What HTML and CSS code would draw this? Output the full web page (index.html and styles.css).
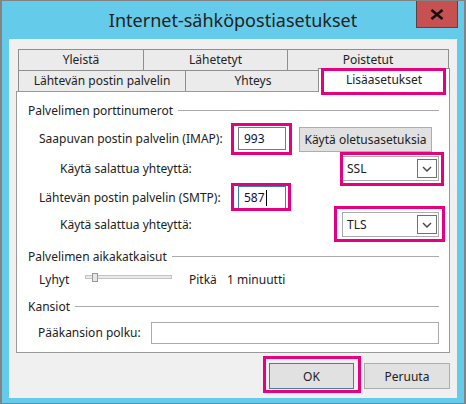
FILE: index.html
```html
<!DOCTYPE html>
<html lang="fi">
<head>
    <meta charset="UTF-8">
    <title>Internet-sähköpostiasetukset</title>
    <link rel="stylesheet" href="styles.css">
</head>
<body>
    <div class="window">
        <div class="titlebar">
            <div class="spacer"></div>
            <div class="title">Internet-sähköpostiasetukset</div>
            <button class="close" title="Sulje">
                <svg width="14" height="11" viewBox="0 0 14 11"><path d="M1.5 1 L12.5 10 M12.5 1 L1.5 10" stroke="#111" stroke-width="2.6" fill="none"/></svg>
            </button>
        </div>

        <div class="client">
            <div class="tabs">
                <div class="tabrow">
                    <div class="tab tab-yleista">Yleistä</div>
                    <div class="tab tab-lahetetyt">Lähetetyt</div>
                    <div class="tab tab-poistetut">Poistetut</div>
                </div>
                <div class="tabrow">
                    <div class="tab tab-lahteva">Lähtevän postin palvelin</div>
                    <div class="tab tab-yhteys">Yhteys</div>
                    <div class="tab tab-active mark mark-tab">Lisäasetukset</div>
                </div>
            </div>

            <div class="panel">
                <div class="group">Palvelimen porttinumerot</div>

                <div class="row row-imap">
                    <span class="label label-port">Saapuvan postin palvelin (IMAP):</span>
                    <div class="field port mark mark-imap">993</div>
                    <button class="btn btn-defaults">Käytä oletusasetuksia</button>
                </div>

                <div class="row row-ssl">
                    <span class="label label-sub">Käytä salattua yhteyttä:</span>
                    <div class="select mark mark-ssl">
                        <span>SSL</span>
                        <span class="chev"><svg width="10" height="6" viewBox="0 0 10 6"><path d="M1 1 L5 5 L9 1" stroke="#444" stroke-width="1.4" fill="none"/></svg></span>
                    </div>
                </div>

                <div class="row row-smtp">
                    <span class="label label-port">Lähtevän postin palvelin (SMTP):</span>
                    <div class="field port focus mark mark-smtp">587<span class="caret"></span></div>
                </div>

                <div class="row row-tls">
                    <span class="label label-sub">Käytä salattua yhteyttä:</span>
                    <div class="select mark mark-tls">
                        <span>TLS</span>
                        <span class="chev"><svg width="10" height="6" viewBox="0 0 10 6"><path d="M1 1 L5 5 L9 1" stroke="#444" stroke-width="1.4" fill="none"/></svg></span>
                    </div>
                </div>

                <div class="group group-timeout">Palvelimen aikakatkaisut</div>

                <div class="row row-slider">
                    <span class="label label-short">Lyhyt</span>
                    <div class="track"><div class="thumb"></div></div>
                    <span class="label-long">Pitkä</span>
                    <span>1 minuutti</span>
                </div>

                <div class="group group-folders">Kansiot</div>

                <div class="row row-path">
                    <span class="label label-path">Pääkansion polku:</span>
                    <div class="field path"></div>
                </div>
            </div>

            <div class="buttons">
                <button class="btn btn-ok mark mark-ok">OK</button>
                <button class="btn btn-cancel">Peruuta</button>
            </div>
        </div>
    </div>
</body>
</html>
```

FILE: styles.css
```css
* { box-sizing: border-box; }
body { margin: 0; font-family: "Noto Sans", sans-serif; font-size: 12px; color: #222; }

.window { width: 466px; height: 404px; background: #65cbea; border: 2px solid #838383; border-top-width: 1px; border-bottom-width: 1px; display: flex; flex-direction: column; }
.titlebar { height: 38px; display: flex; align-items: flex-start; }
.titlebar .spacer { width: 48px; }
.title { flex: 1; text-align: center; line-height: 39px; font-size: 18px; color: #222; }
.close { width: 42px; height: 27px; margin-right: 6px; padding: 0; background: #c75050; border: 1px solid #5b4242; border-top: none; display: flex; align-items: center; justify-content: center; }

.client { flex: 1; margin: 0 7px 5px; background: #f0f0f0; padding: 10px 7px 0; }

/* tabs */
.tabs { margin: 0 1px 0 2px; }
.tabrow { display: flex; height: 21px; }
.tab { height: 21px; margin-right: -1px; border: 1px solid #8e8e8e; border-bottom: none; background: #ebebeb; text-align: center; line-height: 19px; }
.tab-yleista { width: 126px; }
.tab-lahetetyt { width: 145px; }
.tab-poistetut { width: 162px; }
.tab-lahteva { width: 168px; }
.tab-yhteys { width: 136px; }
.tab-active { width: 132px; height: 24px; margin-left: -2px; margin-top: -2px; align-self: flex-start; background: #fff; line-height: 22px; z-index: 1; }

/* pink annotation boxes */
.mark { position: relative; }
.mark::after { content: ''; position: absolute; border: 3px solid #e5007d; pointer-events: none; }
.mark-tab::after { top: -1px; left: 2px; right: 3px; bottom: -3px; }
.mark-imap::after { top: -5px; left: -8px; right: -7px; bottom: -6px; }
.mark-ssl::after { top: -5px; left: -3px; right: -6px; bottom: -6px; }
.mark-smtp::after { top: -4px; left: -8px; right: -6px; bottom: -3px; }
.mark-tls::after { top: -7px; left: -9px; right: -7px; bottom: -6px; }
.mark-ok::after { top: -8px; left: -7px; right: -8px; bottom: -5px; }

/* panel */
.panel { height: 262px; background: #fff; border: 1px solid #999; padding: 8px 10px 0 11px; display: flex; flex-direction: column; }
.group { display: flex; align-items: center; height: 20px; }
.group::after { content: ''; flex: 1; height: 1px; margin-left: 5px; background: #ababab; }
.group-timeout { margin-top: 9px; }
.group-folders { margin-top: 6px; }

.row { display: flex; align-items: flex-start; }
.label { padding-left: 11px; }
.label-port { width: 210px; }
.label-sub { padding-left: 32px; }
.row-imap { height: 26px; margin-top: 6px; line-height: 26px; }
.row-ssl { height: 25px; margin-top: 4px; line-height: 25px; }
.row-smtp { height: 25px; margin-top: 4px; line-height: 25px; }
.row-tls { height: 25px; margin-top: 2px; line-height: 25px; }
.row-slider { height: 20px; margin-top: 4px; line-height: 20px; }
.row-path { height: 22px; margin-top: 6px; line-height: 22px; }

.field { background: #fff; border: 1px solid #7a7a7a; }
.field.port { width: 48px; height: 23px; margin-top: 1px; padding-left: 5px; line-height: 21px; color: #10103a; }
.field.focus { border-color: #3c7fb1; }
.field.path { width: 288px; height: 22px; margin-left: auto; border-color: #ababab; }
.caret { display: inline-block; width: 1px; height: 16px; margin-left: 1px; background: #000; vertical-align: -4px; }

.select { width: 97px; height: 25px; margin-left: auto; padding-left: 4px; border: 1px solid #acacac; background: #fff; display: flex; align-items: center; justify-content: space-between; }
.chev { width: 20px; height: 19px; margin-right: 1px; border: 1px solid #707070; display: flex; align-items: center; justify-content: center; }

.btn { font-family: inherit; font-size: 12px; color: #222; background: #e1e1e1; border: 1px solid #adadad; padding: 0; }
.btn-defaults { width: 133px; height: 25px; margin-left: 13px; margin-top: 1px; line-height: 23px; }

.label-short { width: 57px; }
.track { position: relative; width: 87px; height: 4px; margin-top: 5px; border: 1px solid #c4c4c4; background: #e7eaea; }
.thumb { position: absolute; left: 6px; top: -3px; width: 6px; height: 9px; background: #e6e6e6; border: 1px solid #9a9a9a; }
.label-long { width: 38px; margin-left: 17px; }
.label-path { padding-left: 10px; }

/* dialog buttons */
.buttons { display: flex; justify-content: flex-end; gap: 10px; margin-top: 10px; }
.btn-ok { width: 85px; height: 26px; border-color: #3c7fb1; }
.btn-cancel { width: 86px; height: 26px; }
```
